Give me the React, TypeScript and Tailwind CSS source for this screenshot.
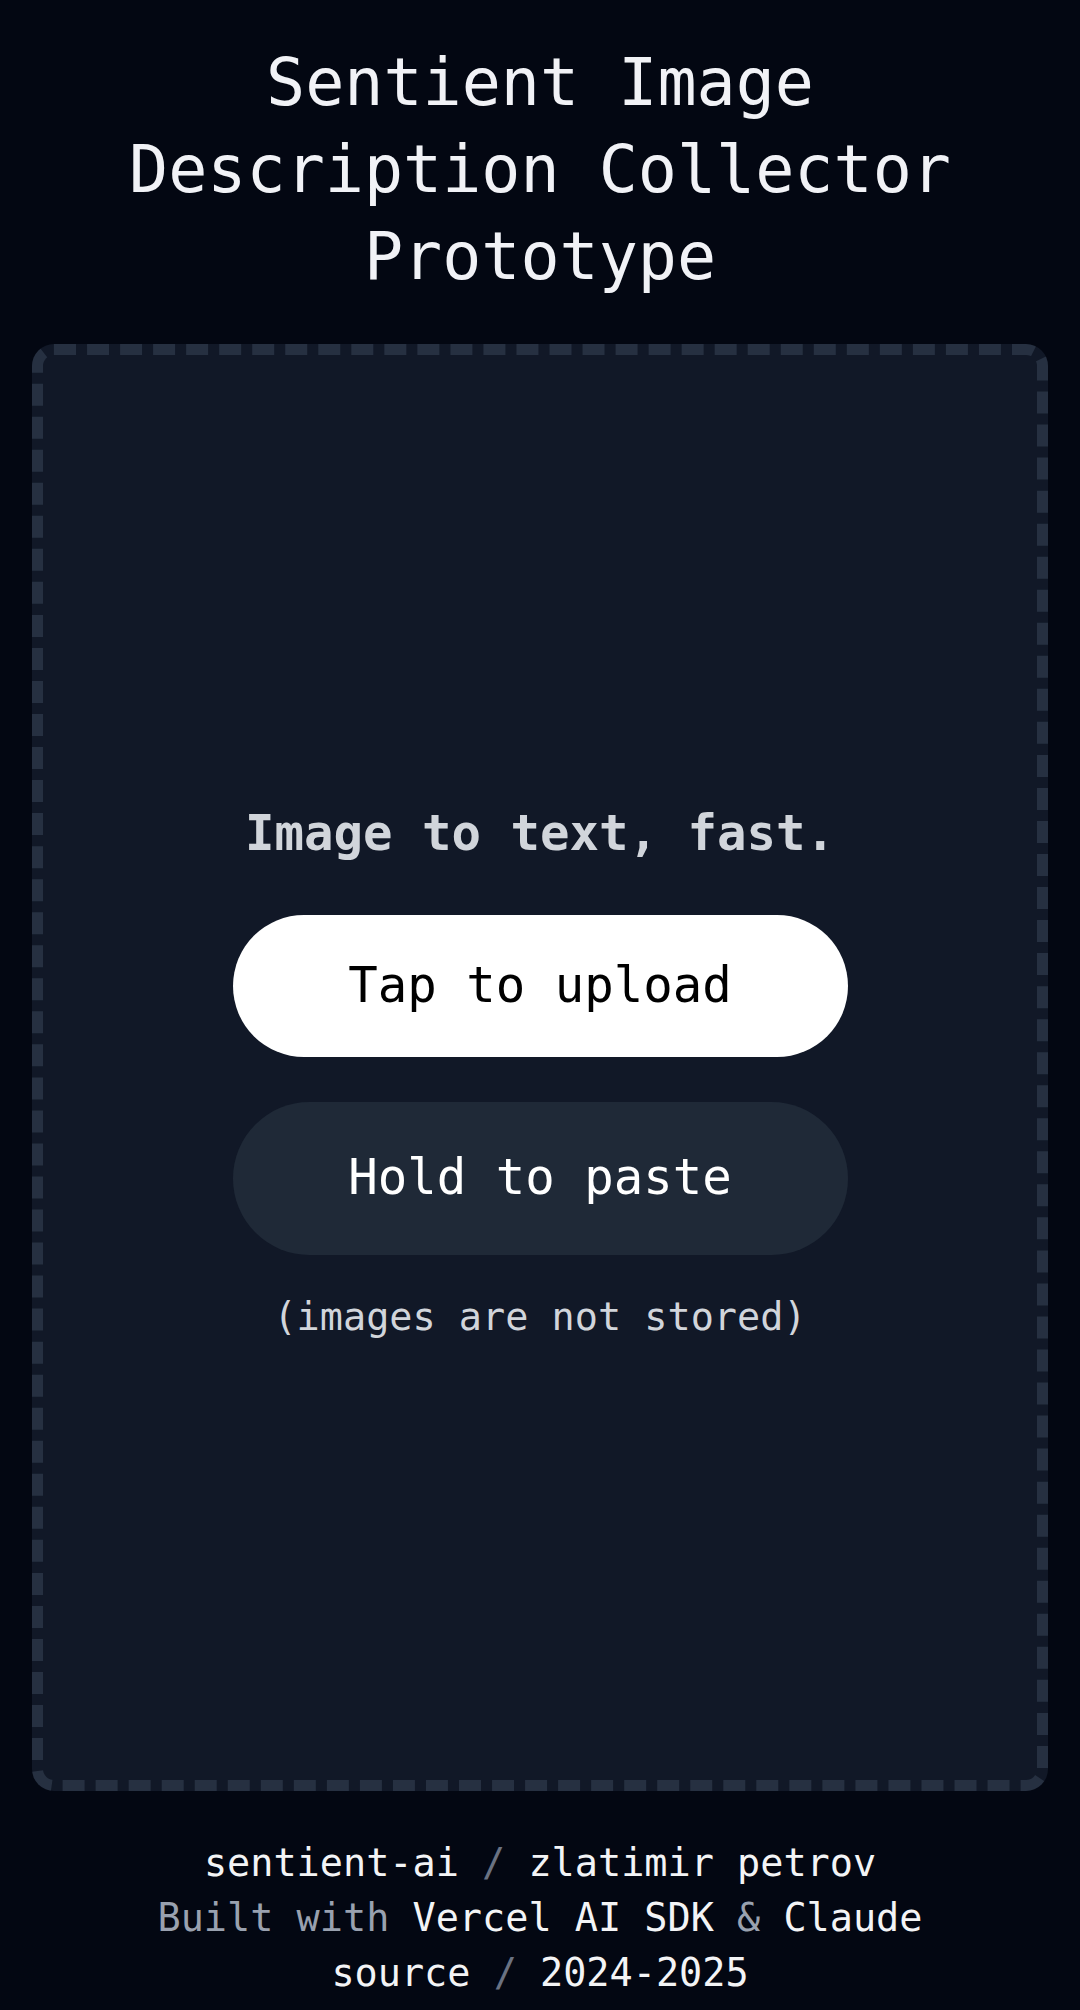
export default function App() {
  return (
    <div className="min-h-screen bg-[#030712] font-['DejaVu_Sans_Mono',monospace] text-gray-100">
      {/* Title */}
      <header className="px-[32px] pt-[39px] pb-[44px]">
        <h1 className="mx-auto max-w-[940px] text-center text-[65px] leading-[87px] text-[#f1f2f6]">
          Sentient Image Description Collector Prototype
        </h1>
      </header>

      {/* Drop zone */}
      <main className="px-[32px]">
        <div className="flex h-[1447px] flex-col items-center justify-center rounded-[22px] border-[11px] border-dashed border-[#263041] bg-[#111827] pt-[12px]">
          <h2 className="mb-[51px] text-[49px] font-bold leading-[60px] text-[#d1d5db]">
            Image to text, fast.
          </h2>
          <button className="flex h-[142px] w-[615px] items-center justify-center rounded-full bg-white text-[49px] text-black">
            Tap to upload
          </button>
          <button className="mt-[45px] flex h-[153px] w-[615px] items-center justify-center rounded-full bg-[#1f2937] text-[49px] text-white">
            Hold to paste
          </button>
          <p className="mt-[35px] text-[38.5px] leading-[54px] text-[#d1d5db]">
            (images are not stored)
          </p>
        </div>
      </main>

      {/* Footer */}
      <footer className="pt-[44px] pb-[9px] text-center text-[38.5px] leading-[55px] text-[#f3f4f6]">
        <p>
          sentient-ai <span className="text-gray-500">/</span> zlatimir petrov
        </p>
        <p>
          <span className="text-gray-400">Built with</span> Vercel AI SDK{' '}
          <span className="text-gray-400">&amp;</span> Claude
        </p>
        <p>
          source <span className="text-gray-500">/</span> 2024-2025
        </p>
      </footer>
    </div>
  );
}
